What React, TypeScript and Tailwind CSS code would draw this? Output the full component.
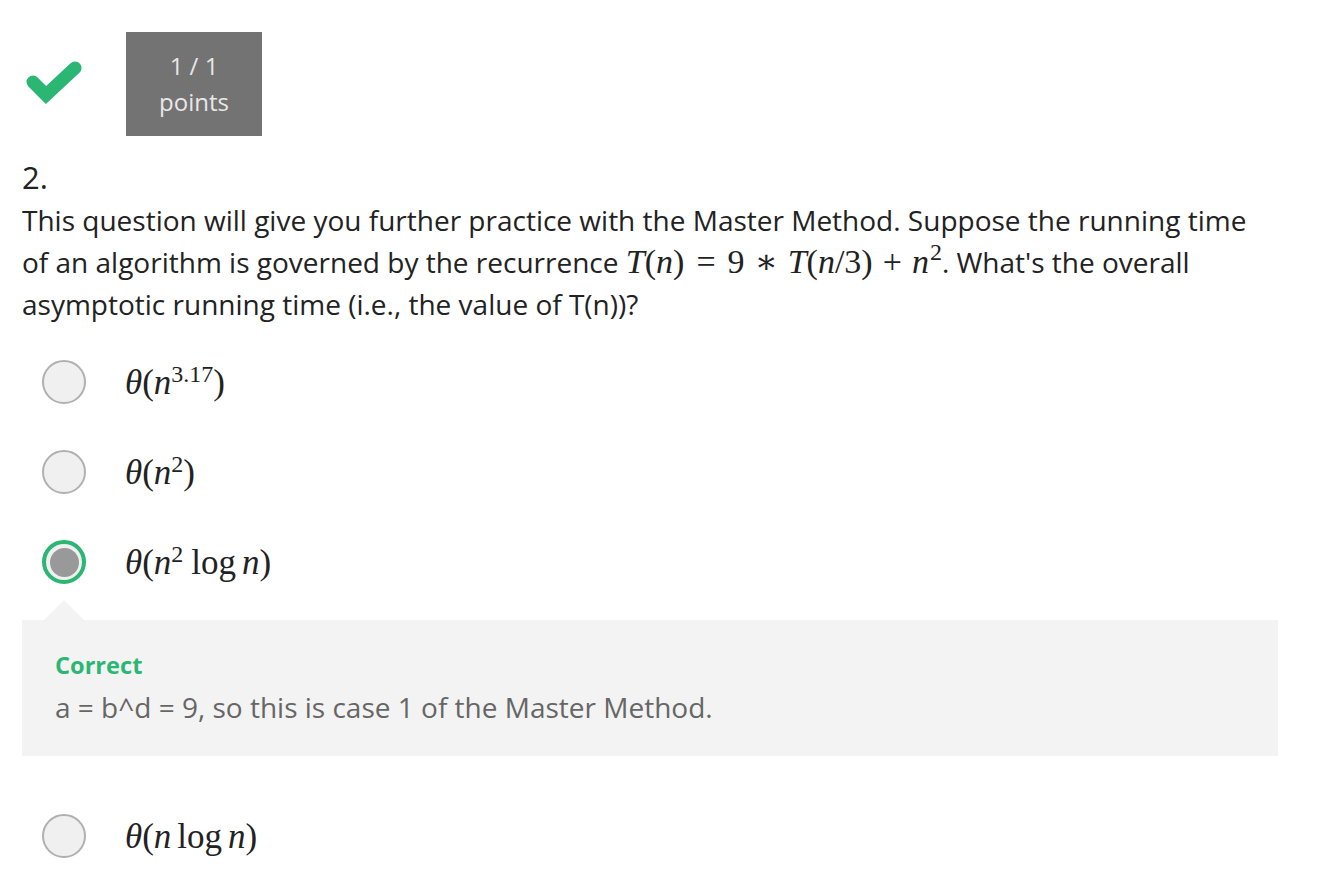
import React from "react";

const sans = { fontFamily: '"Open Sans", "Liberation Sans", sans-serif' };
const serif = { fontFamily: '"Liberation Serif", "DejaVu Serif", serif' };

function Radio({ selected }: { selected?: boolean }) {
  if (selected) {
    return (
      <div className="w-[44px] h-[44px] rounded-full border-[4px] border-[#2bb673] bg-[#f0f0f0] flex items-center justify-center shrink-0">
        <div className="w-[29px] h-[29px] rounded-full bg-[#999999]" />
      </div>
    );
  }
  return <div className="w-[44px] h-[44px] rounded-full border-2 border-[#b0b0b0] bg-[#f0f0f0] shrink-0" />;
}

function Option({ selected, children }: { selected?: boolean; children: React.ReactNode }) {
  return (
    <div className="flex items-center h-[44px] pl-[42px]">
      <Radio selected={selected} />
      <div className="ml-[39px] text-[35px] text-[#222] leading-none whitespace-nowrap" style={serif}>
        {children}
      </div>
    </div>
  );
}

export default function App() {
  return (
    <div className="w-[1322px] h-[884px] bg-white overflow-hidden text-[#222]" style={sans}>
      <div className="pl-[22px] pt-[32px]">
        <div className="flex items-start">
          <svg width="60" height="50" viewBox="0 0 60 50" className="ml-[2px]" style={{ marginTop: 28 }}>
            <path d="M9 22 L22 35 L51 8" fill="none" stroke="#2bb673" strokeWidth="13" strokeLinecap="round" strokeLinejoin="miter" />
          </svg>
          <div className="ml-[42px] w-[136px] h-[104px] bg-[#737373] flex flex-col items-center justify-center text-[#e8e8e8] text-[24px] leading-[36px]">
            <div>1 / 1</div>
            <div>points</div>
          </div>
        </div>
        <div className="mt-[21px] text-[31px] leading-[40px]">2.</div>
        <div className="mt-[2px] text-[28px] leading-[42px] w-[1250px] text-[#222]">
          This question will give you further practice with the Master Method. Suppose the running time of an algorithm is governed by the recurrence{" "}
          <span className="text-[34px] leading-[0px] whitespace-nowrap" style={serif}>
            <i>T</i>(<i>n</i>)<span className="mx-[12px]">=</span>9<span className="mx-[10px]">∗</span>
            <i>T</i>(<i>n</i>/3)<span className="mx-[10px]">+</span>
            <i>n</i>
            <sup className="text-[24px] top-[-13px] ml-[1px]">2</sup>
          </span>
          . What's the overall asymptotic running time (i.e., the value of T(n))?
        </div>
      </div>
      <div className="mt-[35px] flex flex-col">
        <Option>
          <i>θ</i>(<i>n</i>
          <sup className="text-[24px]">3.17</sup>)
        </Option>
        <div className="h-[46px]" />
        <Option>
          <i>θ</i>(<i>n</i>
          <sup className="text-[24px]">2</sup>)
        </Option>
        <div className="h-[46px]" />
        <Option selected>
          <i>θ</i>(<i>n</i>
          <sup className="text-[24px]">2</sup>
          <span className="ml-[8px]">log</span>
          <i className="ml-[6px]">n</i>)
        </Option>
        <div className="relative ml-[22px] mt-[36px] w-[1256px] h-[136px] bg-[#f3f3f3] px-[33px] pt-[30px]">
          <div className="absolute left-[22px] top-[-20px] w-0 h-0 border-l-[20px] border-r-[20px] border-b-[20px] border-l-transparent border-r-transparent border-b-[#f3f3f3]" />
          <div className="text-[23.6px] font-bold text-[#2bb673] leading-[30px]">Correct</div>
          <div className="text-[28px] text-[#666] leading-[44px] mt-[5px]">a = b^d = 9, so this is case 1 of the Master Method.</div>
        </div>
        <div className="h-[58px]" />
        <Option>
          <i>θ</i>(<i>n</i>
          <span className="ml-[6px]">log</span>
          <i className="ml-[6px]">n</i>)
        </Option>
      </div>
    </div>
  );
}
